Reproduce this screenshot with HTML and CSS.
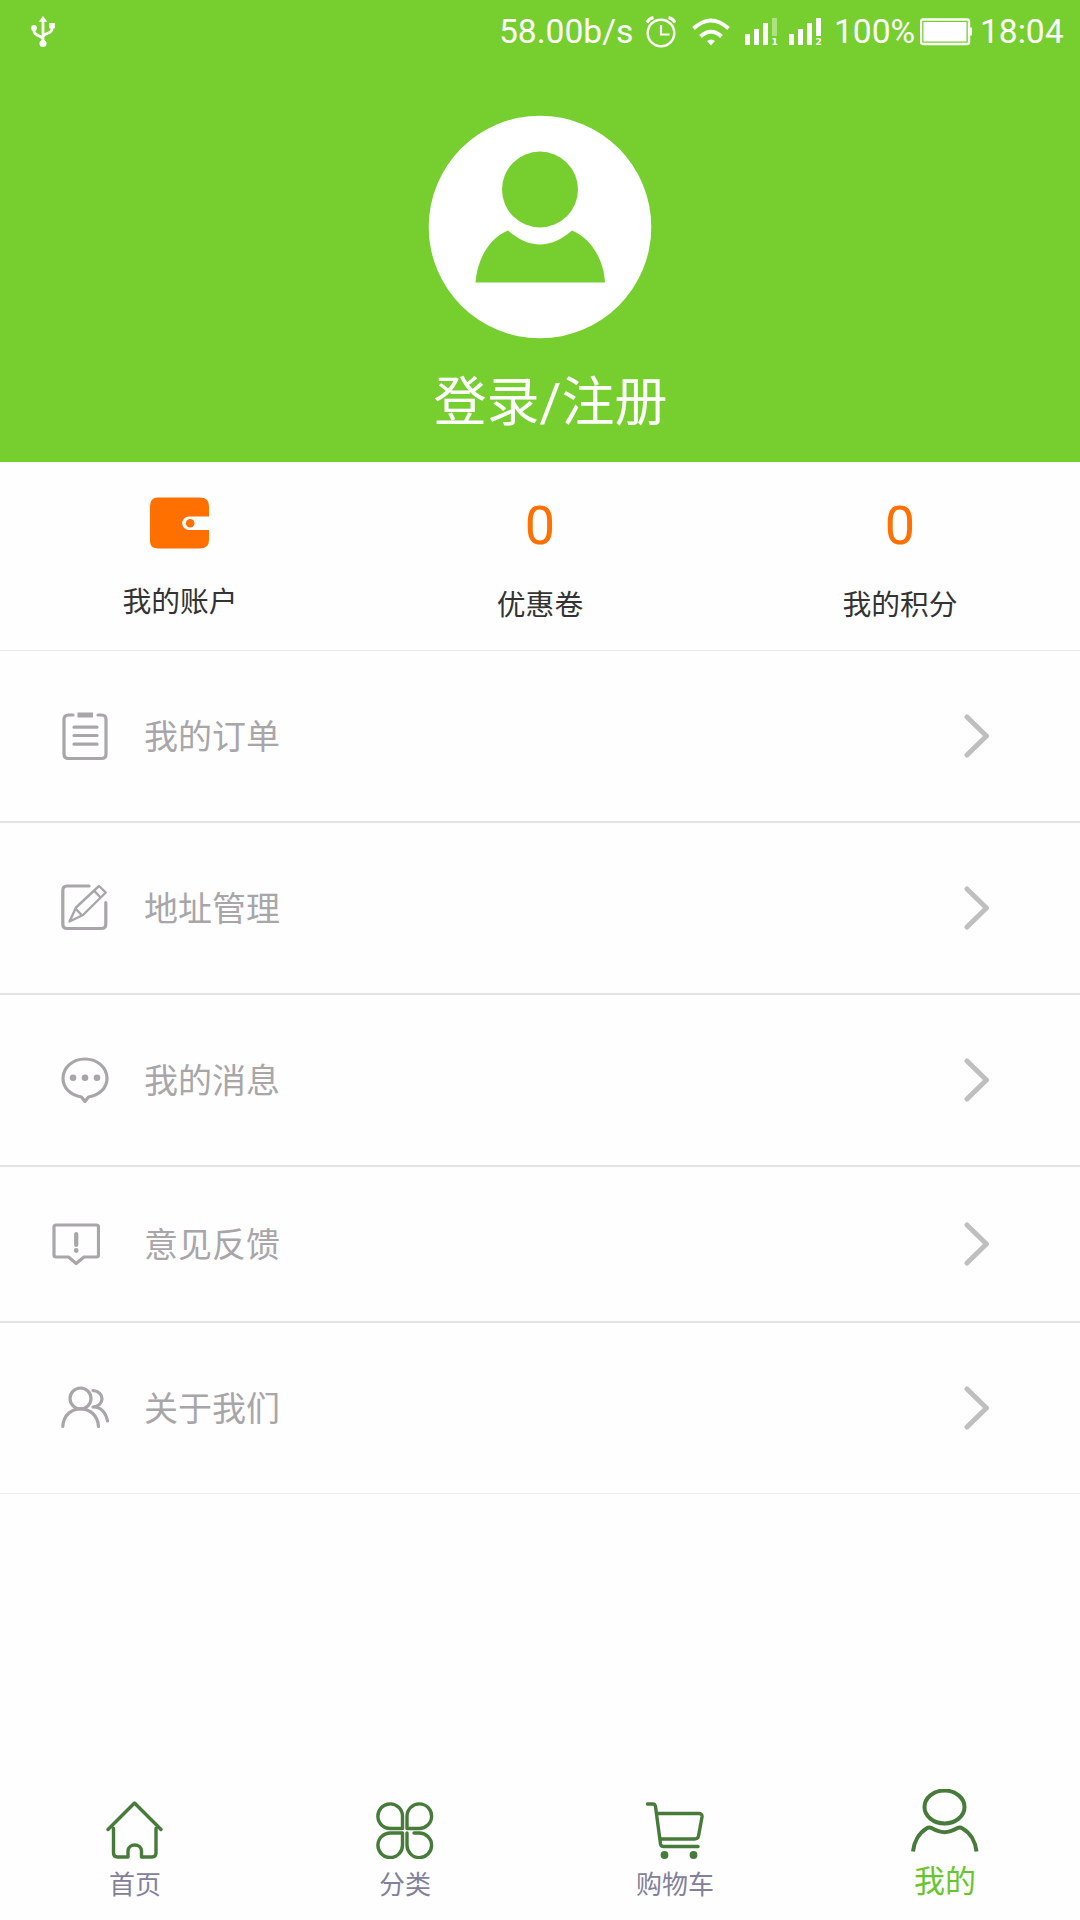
FILE: index.html
```html
<!DOCTYPE html>
<html lang="zh-CN">
<head>
    <meta charset="UTF-8">
    <meta name="viewport" content="width=device-width, initial-scale=1.0">
    <title>我的</title>
    <link rel="stylesheet" href="styles.css">
</head>
<body>
    <div class="page">
        <header class="header">
            <div class="status-bar">
                <svg class="usb" width="24" height="32" viewBox="0 0 24 32" fill="none" stroke="#fff" stroke-width="2.8">
                    <path d="M12 4v23M3 12v3c0 5 9 5 9 8.500M21 10v3c0 5-9 4-9 8"/>
                    <g fill="#fff" stroke="none">
                        <path d="M12 0l4.200 5.800H7.800z"/>
                        <circle cx="3" cy="12" r="2.900"/>
                        <rect x="18.200" y="7" width="5.600" height="5.400"/>
                        <circle cx="12" cy="27.500" r="3.500"/>
                    </g>
                </svg>
                <span class="speed">58.00b/s</span>
                <svg class="clock" width="30" height="32" viewBox="0 0 30 32" fill="none" stroke="#fff" stroke-width="2.400">
                    <circle cx="15" cy="17" r="13.300"/>
                    <path d="M15 9v9.500h8.500" stroke-width="2.200"/>
                    <path d="M1 6.500Q3 2.500 7.500 1.500M29 6.500Q27 2.500 22.500 1.500" stroke-width="3"/>
                </svg>
                <svg class="wifi" width="38" height="28" viewBox="0 0 38 28" fill="none" stroke="#fff" stroke-width="4">
                    <path d="M1.500 10.500Q19-5.500 36.500 10.500M8.500 18.500Q19 9 29.500 18.500"/>
                    <path d="M15 23Q19 20 23 23L19 27.500z" fill="#fff" stroke="none"/>
                </svg>
                <svg class="signal" width="33" height="28" viewBox="0 0 33 28" fill="#fff">
                    <rect x="0" y="16" width="5" height="11"/>
                    <rect x="9" y="11" width="5" height="16"/>
                    <rect x="18" y="5" width="5" height="22"/>
                    <rect x="27" y="0" width="5" height="18" opacity=".4"/>
                    <text x="26.500" y="27" class="sim">1</text>
                </svg>
                <svg class="signal signal2" width="33" height="28" viewBox="0 0 33 28" fill="#fff">
                    <rect x="0" y="16" width="5" height="11"/>
                    <rect x="9" y="11" width="5" height="16"/>
                    <rect x="18" y="5" width="5" height="22"/>
                    <rect x="27" y="0" width="5" height="18"/>
                    <text x="26.500" y="27" class="sim">2</text>
                </svg>
                <span class="percent">100%</span>
                <svg class="battery" width="53" height="28" viewBox="0 0 53 28" fill="#fff">
                    <rect x="1" y="1.500" width="48" height="24.500" rx="2" fill="none" stroke="#fff" stroke-width="2.400"/>
                    <rect x="3.500" y="4" width="43" height="19.500"/>
                    <path d="M49 9.500h3v8h-3z"/>
                </svg>
                <span class="time">18:04</span>
            </div>
            <svg class="avatar" width="224" height="224" viewBox="0 0 224 224">
                <circle cx="112" cy="112" r="111.300" fill="#fff"/>
                <circle cx="112" cy="74.500" r="38" fill="#76cf2f"/>
                <path d="M47.500 167.500C49 145 61 123 80 115.500C101 134 123 134 144 115.500C163 123 176 145 177 167.500z" fill="#76cf2f"/>
            </svg>
            <div class="login">登录<span class="slash">/</span>注册</div>
        </header>

        <section class="stats">
            <div class="stat account">
                <svg width="60" height="52" viewBox="0 0 60 52">
                    <path d="M8 .5H50Q59 .5 59 9V19.500H39a6.800 6.800 0 0 0 0 13.600H59V43Q59 51.500 50 51.500H8Q-.5 51.500 0 43V9Q0 .5 8 .5z" fill="#ff7000"/>
                    <circle cx="40.200" cy="26.300" r="4.300" fill="#ff7000"/>
                </svg>
                <span class="stat-label">我的账户</span>
            </div>
            <div class="stat">
                <span class="count">0</span>
                <span class="stat-label">优惠卷</span>
            </div>
            <div class="stat">
                <span class="count">0</span>
                <span class="stat-label">我的积分</span>
            </div>
        </section>

        <ul class="menu">
            <li class="row">
                <svg class="icon" width="48" height="50" viewBox="0 0 48 50">
                    <path d="M12 4H7.500Q3 4 3 8.500V43Q3 47.500 7.500 47.500H40.500Q45 47.500 45 43V8.500Q45 4 40.500 4H37"/>
                    <path d="M13 16.200H36M13 24.500H36M13 33.200H36"/>
                    <path d="M19 4H29.500" stroke-width="5" stroke-linecap="square"/>
                </svg>
                <span class="name">我的订单</span>
                <svg class="arrow" width="26" height="44" viewBox="0 0 26 44"><path d="M3 3L22.500 22L3 41"/></svg>
            </li>
            <li class="row">
                <svg class="icon" width="48" height="50" viewBox="0 0 48 50">
                    <path d="M28 3H6Q1.800 3 1.800 7.500V41Q1.800 45.500 6 45.500H40.500Q44.800 45.500 44.800 41V19.500"/>
                    <path d="M8.500 38.500L15 24.500L38 3L44.800 9.500L22 32zM14.500 25.500L21 32.500M33 7.500L39.500 14.500" stroke-width="2.400"/>
                </svg>
                <span class="name">地址管理</span>
                <svg class="arrow" width="26" height="44" viewBox="0 0 26 44"><path d="M3 3L22.500 22L3 41"/></svg>
            </li>
            <li class="row">
                <svg class="icon" width="48" height="50" viewBox="0 0 48 50">
                    <path d="M20.500 42C9 40 2 32.500 2 23.500C2 12.500 11.500 4 24 4S46 12.500 46 23.500C46 32.500 39 40 27.500 42L24 46.500z"/>
                    <g class="dots"><circle cx="12" cy="22.800" r="3.300"/><circle cx="24" cy="22.800" r="3.300"/><circle cx="36" cy="22.800" r="3.300"/></g>
                </svg>
                <span class="name">我的消息</span>
                <svg class="arrow" width="26" height="44" viewBox="0 0 26 44"><path d="M3 3L22.500 22L3 41"/></svg>
            </li>
            <li class="row feedback">
                <svg class="icon" width="48" height="50" viewBox="0 0 48 50">
                    <path d="M4 6H44.500Q46.500 6 46.500 8V36Q46.500 38 44.500 38H32L24.200 44.500L16.500 38H4Q2 38 2 36V8Q2 6 4 6z"/>
                    <path d="M24.200 15V26" stroke-width="4.200"/>
                    <g class="dots"><circle cx="24.200" cy="31.500" r="2.400"/></g>
                </svg>
                <span class="name">意见反馈</span>
                <svg class="arrow" width="26" height="44" viewBox="0 0 26 44"><path d="M3 3L22.500 22L3 41"/></svg>
            </li>
            <li class="row last">
                <svg class="icon" width="48" height="50" viewBox="0 0 48 50">
                    <circle cx="19.500" cy="15.500" r="10.500"/>
                    <path d="M1.800 43.500C3 20 36 20 37.500 43.500"/>
                    <path d="M32 7.500C44 8.500 44 23 32 24C41 24 45 31 46.500 38"/>
                </svg>
                <span class="name">关于我们</span>
                <svg class="arrow" width="26" height="44" viewBox="0 0 26 44"><path d="M3 3L22.500 22L3 41"/></svg>
            </li>
        </ul>

        <nav class="tabs">
            <a class="tab">
                <svg width="58" height="58" viewBox="0 0 58 58">
                    <path d="M2 28.500L28.500 2L55 28.500M7.500 27.500V52Q7.500 56 11.500 56H22V50C22 42 35.500 42 35.500 50V56H46Q50 56 50 52V27.500"/>
                </svg>
                <span>首页</span>
            </a>
            <a class="tab">
                <svg width="58" height="58" viewBox="0 0 58 58">
                    <path d="M26.500 27.500H15A12.300 12.300 0 1 1 26.500 15zM31 27.500V15A12.300 12.300 0 1 1 43 27.500zM26.500 32H15A12.300 12.300 0 1 0 26.500 44zM31 32V44A12.300 12.300 0 1 0 43 32H38"/>
                </svg>
                <span>分类</span>
            </a>
            <a class="tab">
                <svg width="58" height="58" viewBox="0 0 58 58">
                    <path d="M1.500 3H7Q9 3 9.500 5.500L14.500 43Q15 45.500 17.500 45.500H52M10.500 12.500H52.500Q56.500 12.500 56 16L52.500 35Q52 38 48.500 38H14.500"/>
                    <circle cx="18.500" cy="54" r="3.900" class="wheel"/>
                    <circle cx="47.500" cy="54" r="3.900" class="wheel"/>
                </svg>
                <span>购物车</span>
            </a>
            <a class="tab active">
                <svg width="68" height="64" viewBox="0 0 68 64">
                    <ellipse cx="33.500" cy="18" rx="20" ry="16.500"/>
                    <path d="M2 62.500C3 53 8 44 15.500 39.500Q17.500 38 20.500 39C30.500 44.500 36.500 44.500 46.500 39Q49.500 38 51.500 39.500C59.500 44 64.500 53 65.500 62.500"/>
                </svg>
                <span>我的</span>
            </a>
        </nav>
    </div>
</body>
</html>
```
FILE: styles.css
```css
* {
    box-sizing: border-box;
}

body {
    margin: 0;
    background-color: #fefefe;
    font-family: "Noto Sans CJK SC", "Noto Sans", sans-serif;
}

svg {
    display: block;
    flex-shrink: 0;
}

.page {
    width: 1080px;
    height: 1920px;
    display: flex;
    flex-direction: column;
    overflow: hidden;
}

/* header */
.header {
    height: 462px;
    background-color: #76cf2f;
    color: #fff;
    display: flex;
    flex-direction: column;
    align-items: center;
}

.status-bar {
    width: 100%;
    height: 63px;
    padding: 0 17px 0 31px;
    display: flex;
    align-items: center;
    font-family: Roboto, sans-serif;
    font-size: 33.6px;
    line-height: 62px;
    white-space: nowrap;
}

.speed {
    margin-left: auto;
    width: 134px;
}

.clock {
    margin-left: 13px;
}

.wifi {
    margin-left: 16px;
}

.signal {
    margin-left: 15px;
}

.signal2 {
    margin-left: 11px;
}

.sim {
    font: bold 9px "DejaVu Sans", sans-serif;
}

.percent {
    width: 86px;
    margin-left: 12px;
}

.time {
    width: 83px;
    margin-left: 7px;
}

.avatar {
    margin-top: 52px;
}

.login {
    margin: 20px 0 0 21px;
    font-size: 53px;
    line-height: 78px;
}

.slash {
    font-family: Roboto, sans-serif;
}

/* account numbers */
.stats {
    display: flex;
    height: 189px;
    border-bottom: 1px solid #e9e9e9;
}

.stat {
    flex: 1;
    display: flex;
    flex-direction: column;
    align-items: center;
    padding-top: 32px;
}

.account {
    padding-top: 35px;
}

.account .stat-label {
    margin-top: 31px;
}

.count {
    font-family: Roboto, sans-serif;
    font-size: 54px;
    line-height: 64px;
    color: #ff7000;
}

.stat-label {
    margin-top: 25px;
    font-size: 28.8px;
    line-height: 40px;
    color: #333;
}

/* menu list */
.menu {
    margin: 0;
    padding: 0;
    list-style: none;
}

.row {
    height: 172px;
    display: flex;
    align-items: center;
    padding: 0 90px 0 61px;
    border-bottom: 2px solid #e3e2e5;
}

.icon {
    fill: none;
    stroke: #a8a6a9;
    stroke-width: 3.2;
    stroke-linecap: round;
    stroke-linejoin: round;
}

.dots {
    fill: #a8a6a9;
    stroke: none;
}

.name {
    margin: 0 0 2px 35px;
    font-size: 34px;
    line-height: 50px;
    color: #a8a6a9;
}

.arrow {
    margin-left: auto;
    fill: none;
    stroke: #bfbfbf;
    stroke-width: 5;
    stroke-linecap: round;
    stroke-linejoin: round;
}

.feedback {
    height: 156px;
    padding-left: 52px;
}

.feedback .name {
    margin-left: 44px;
}

.last {
    height: 171px;
    border-bottom: 1px solid #ededed;
}

/* bottom tabs */
.tabs {
    display: flex;
    margin-top: auto;
    height: 140px;
}

.tab {
    flex: 1;
    display: flex;
    flex-direction: column;
    align-items: center;
    padding-top: 21px;
    font-size: 26px;
    line-height: 36px;
    color: #83819a;
}

.tab svg {
    fill: none;
    stroke: #477b3a;
    stroke-width: 3.4;
    stroke-linecap: round;
    stroke-linejoin: round;
}

.tab .wheel {
    fill: #477b3a;
    stroke: none;
}

.tab span {
    margin-top: 6px;
}

.active {
    padding-top: 9px;
    font-size: 31px;
    color: #69c52b;
}

.active svg {
    stroke-width: 4;
    stroke-linecap: butt;
}

.active span {
    margin-top: 8px;
}
```
